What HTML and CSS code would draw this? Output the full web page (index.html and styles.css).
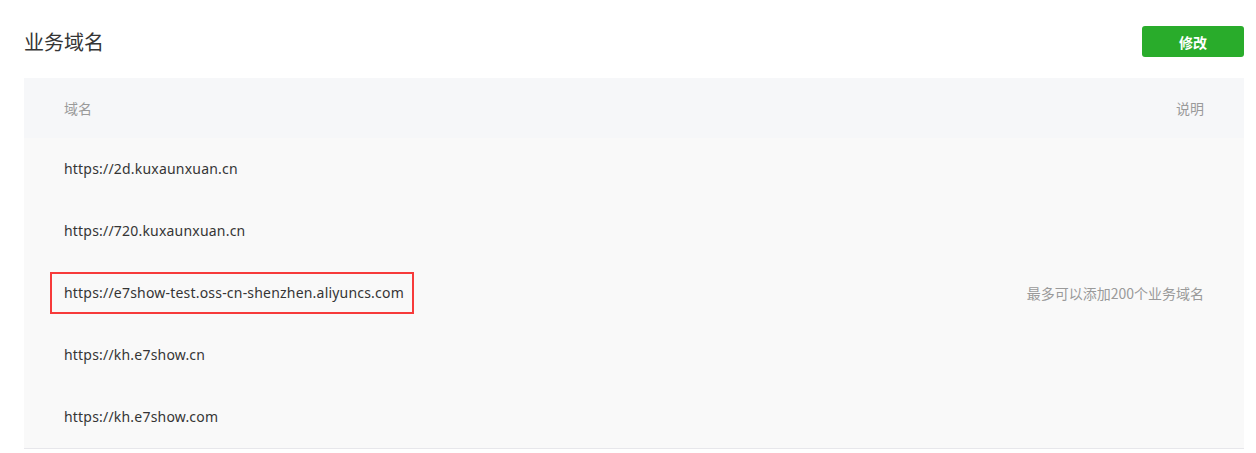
FILE: index.html
```html
<!DOCTYPE html>
<html lang="zh-CN">
<head>
<meta charset="utf-8">
<title>业务域名</title>
<link rel="stylesheet" href="styles.css">
</head>
<body>
<div class="page">
  <div class="head">
    <h2 class="title">业务域名</h2>
    <button class="btn">修改</button>
  </div>
  <div class="table">
    <div class="thead">
      <span>域名</span>
      <span>说明</span>
    </div>
    <div class="tbody">
      <div class="list">
        <div class="row"><span>https://2d.kuxaunxuan.cn</span></div>
        <div class="row"><span>https://720.kuxaunxuan.cn</span></div>
        <div class="row"><span class="mark">https://e7show-test.oss-cn-shenzhen.aliyuncs.com</span></div>
        <div class="row"><span>https://kh.e7show.cn</span></div>
        <div class="row"><span>https://kh.e7show.com</span></div>
      </div>
      <div class="note">最多可以添加200个业务域名</div>
    </div>
  </div>
</div>
</body>
</html>
```

FILE: styles.css
```css
* { box-sizing: border-box; }
html, body { margin: 0; padding: 0; background: #fff; }
body {
  font-family: "Noto Sans", "Noto Sans CJK SC", sans-serif;
  color: #353535;
}
.page { padding: 0 12px 0 24px; }
.head {
  height: 78px;
  display: flex;
  align-items: center;
  justify-content: space-between;
}
.title {
  margin: 0;
  font-size: 20px;
  font-weight: normal;
  color: #353535;
  font-family: "Noto Sans CJK SC", sans-serif;
  padding-top: 4px;
}
.btn {
  width: 102px;
  height: 31px;
  margin-top: 5px;
  border: 0;
  border-radius: 3px;
  background: #29ac2b;
  color: #fff;
  font-size: 14px;
  font-weight: bold;
  font-family: "Noto Sans CJK SC", sans-serif;
  padding: 0;
}
.table { border-bottom: 1px solid #e7e7eb; }
.thead {
  height: 60px;
  background: #f6f7f9;
  display: flex;
  align-items: center;
  justify-content: space-between;
  padding: 0 40px;
  font-size: 14px;
  color: #9a9a9a;
  font-family: "Noto Sans CJK SC", sans-serif;
}
.tbody {
  background: #f9f9f9;
  display: flex;
  justify-content: space-between;
  align-items: center;
  padding-right: 40px;
}
.row {
  height: 62px;
  display: flex;
  align-items: center;
  padding-left: 40px;
  font-size: 14px;
  letter-spacing: 0.2px;
  line-height: 18px;
}
.mark {
  margin-left: -14px;
  padding: 10px 8px 10px 12px;
  border: 2px solid #f73b3b;
}
.note {
  font-size: 14px;
  color: #9a9a9a;
  font-family: "Noto Sans CJK SC", sans-serif;
}
```
